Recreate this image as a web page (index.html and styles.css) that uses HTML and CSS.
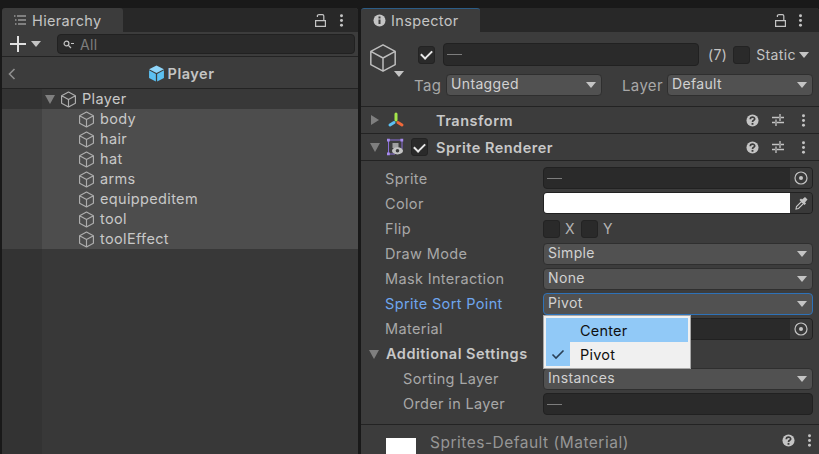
FILE: index.html
```html
<!DOCTYPE html>
<html lang="en">
<head>
    <meta charset="UTF-8">
    <title>Unity Editor</title>
    <link rel="stylesheet" href="styles.css">
</head>

<body>
    <svg class="defs" width="0" height="0">
        <symbol id="cube" viewBox="0 0 16 16">
            <path d="M8 1 14.5 4.5V11.5L8 15 1.5 11.5V4.5ZM1.5 4.5 8 8 14.5 4.5M8 8V15" fill="none" stroke="currentColor" stroke-linejoin="round"/>
        </symbol>
        <symbol id="lock" viewBox="0 0 11 13">
            <path d="M.6 6.6H10.4V12.4H.6ZM2.4 3V1.6C2.4 1 3 .7 4 .7H7.4C8.2 .7 8.8 1.2 8.8 2V6.6" fill="none" stroke="currentColor" stroke-width="1.2"/>
        </symbol>
        <symbol id="dots" viewBox="0 0 5 14">
            <circle cx="2.5" cy="2" r="1.6" fill="currentColor"/>
            <circle cx="2.5" cy="7" r="1.6" fill="currentColor"/>
            <circle cx="2.5" cy="12" r="1.6" fill="currentColor"/>
        </symbol>
        <symbol id="help" viewBox="0 0 14 14">
            <circle cx="7" cy="7" r="6.5" fill="currentColor"/>
            <path d="M4.6 5.6C4.6 2.7 9.4 2.7 9.4 5.3 9.4 6.9 7 6.7 7 8.6" fill="none" stroke="#3c3c3c" stroke-width="1.8"/>
            <rect x="6" y="9.6" width="2" height="2" fill="#3c3c3c"/>
        </symbol>
        <symbol id="sliders" viewBox="0 0 14 14">
            <path d="M1 4.5H8M10 4.5H13M9 1V8M1 9.5H4M6 9.5H13M5 6.5V13" fill="none" stroke="currentColor" stroke-width="1.3"/>
        </symbol>
        <symbol id="target" viewBox="0 0 14 14">
            <circle cx="7" cy="7" r="6" fill="none" stroke="currentColor" stroke-width="1.2"/>
            <circle cx="7" cy="7" r="2" fill="currentColor"/>
        </symbol>
    </svg>

    <div class="editor">
        <section class="panel hierarchy">
            <div class="tabbar">
                <div class="tab">
                    <svg class="tab-icon" width="14" height="12" viewBox="0 0 14 12"><path d="M4 2H13M5 6H13M5 10H13M1 2H2.5M2 6H3.5M2 10H3.5" stroke="#c4c4c4" stroke-width="1.1" fill="none"/></svg>
                    <span>Hierarchy</span>
                </div>
                <div class="tab-actions">
                    <svg width="11" height="13"><use href="#lock"/></svg>
                    <svg width="5" height="13"><use href="#dots"/></svg>
                </div>
            </div>
            <div class="toolbar">
                <svg class="plus" width="16" height="16" viewBox="0 0 16 16"><path d="M8 0V16M0 8H16" stroke="#e0e0e0" stroke-width="2"/></svg>
                <i class="caret light"></i>
                <div class="search">
                    <svg width="11" height="9" viewBox="0 0 11 9"><circle cx="3.5" cy="3.5" r="2.4" fill="none" stroke="#c4c4c4" stroke-width="1.2"/><path d="M5.5 5.5 8 8M8 3.5H11" stroke="#c4c4c4" stroke-width="1.2"/></svg>
                    <span>All</span>
                </div>
            </div>
            <div class="breadcrumb">
                <svg class="back" width="8" height="12" viewBox="0 0 8 12"><path d="M6.5 1 1.5 6 6.5 11" fill="none" stroke="#8f8f8f" stroke-width="1.6"/></svg>
                <div class="crumb">
                    <svg width="17" height="17" viewBox="0 0 16 16"><path d="M8 .5 15 4 8 7.6 1 4Z" fill="#8fd6fb"/><path d="M1 5 7.4 8.4V15.6L1 12.2Z" fill="#5cc0f2"/><path d="M15 5 8.6 8.4V15.6L15 12.2Z" fill="#5cc0f2"/></svg>
                    <span>Player</span>
                </div>
            </div>
            <div class="tree">
                <div class="tree-row root">
                    <i class="arrow-down"></i>
                    <svg class="cube" width="17" height="17"><use href="#cube"/></svg>
                    <span>Player</span>
                </div>
                <div class="tree-row child"><svg class="cube" width="17" height="17"><use href="#cube"/></svg><span>body</span></div>
                <div class="tree-row child"><svg class="cube" width="17" height="17"><use href="#cube"/></svg><span>hair</span></div>
                <div class="tree-row child"><svg class="cube" width="17" height="17"><use href="#cube"/></svg><span>hat</span></div>
                <div class="tree-row child"><svg class="cube" width="17" height="17"><use href="#cube"/></svg><span>arms</span></div>
                <div class="tree-row child"><svg class="cube" width="17" height="17"><use href="#cube"/></svg><span>equippeditem</span></div>
                <div class="tree-row child"><svg class="cube" width="17" height="17"><use href="#cube"/></svg><span>tool</span></div>
                <div class="tree-row child"><svg class="cube" width="17" height="17"><use href="#cube"/></svg><span>toolEffect</span></div>
            </div>
        </section>

        <section class="panel inspector">
            <div class="tabbar">
                <div class="tab active">
                    <svg class="tab-icon" width="13" height="13" viewBox="0 0 13 13"><circle cx="6.5" cy="6.5" r="6" fill="#c4c4c4"/><path d="M6.5 5.5V10M6.5 2.6V4.4" stroke="#3c3c3c" stroke-width="2"/></svg>
                    <span>Inspector</span>
                </div>
                <div class="tab-actions">
                    <svg width="11" height="13"><use href="#lock"/></svg>
                    <svg width="5" height="13"><use href="#dots"/></svg>
                </div>
            </div>

            <div class="object-header">
                <div class="object-icon">
                    <svg class="big-cube" width="30" height="30"><use href="#cube"/></svg>
                    <i class="caret light"></i>
                </div>
                <div class="object-main">
                    <div class="object-line">
                        <span class="check on"></span>
                        <div class="field name-field"><span class="dash"></span></div>
                        <span class="count">(7)</span>
                        <span class="check"></span>
                        <span class="static">Static</span>
                        <i class="caret light"></i>
                    </div>
                    <div class="object-line tags">
                        <span class="tag-label">Tag</span>
                        <div class="select tag-select"><span>Untagged</span><i class="caret"></i></div>
                        <span class="layer-label">Layer</span>
                        <div class="select layer-select"><span>Default</span><i class="caret"></i></div>
                    </div>
                </div>
            </div>

            <div class="component">
                <i class="arrow-right"></i>
                <svg class="comp-icon" width="18" height="18" viewBox="0 0 18 18" stroke-linecap="round">
                    <path d="M9 3V9" stroke="#a4e64a" stroke-width="3"/>
                    <path d="M7 11.5 3 14" stroke="#5cc0f2" stroke-width="3"/>
                    <path d="M11 11.5 15 14" stroke="#f0683a" stroke-width="3"/>
                </svg>
                <span class="comp-check-space"></span>
                <span class="comp-name">Transform</span>
                <div class="comp-actions">
                    <svg width="13" height="13"><use href="#help"/></svg>
                    <svg class="sliders" width="14" height="14"><use href="#sliders"/></svg>
                    <svg width="5" height="13"><use href="#dots"/></svg>
                </div>
            </div>

            <div class="component">
                <i class="arrow-down"></i>
                <svg class="comp-icon" width="18" height="18" viewBox="0 0 18 18">
                    <path d="M2.5 16V2H16V11" fill="none" stroke="#8a6fd8" stroke-width="1"/>
                    <path d="M2.5 16H9" fill="none" stroke="#8a6fd8" stroke-width="1"/>
                    <path d="M1 .8H3.8V3.6H1ZM14.4 .8H17.2V3.6H14.4ZM1 14.4H3.8V17.2H1Z" fill="#a78bf0"/>
                    <rect x="6.5" y="5" width="6" height="5" fill="#a0a0a0"/>
                    <ellipse cx="11.5" cy="12.8" rx="5.5" ry="3.6" fill="#c4c4c4"/>
                    <circle cx="11.5" cy="12.8" r="1.8" fill="#3c3c3c"/>
                </svg>
                <span class="check on"></span>
                <span class="comp-name">Sprite Renderer</span>
                <div class="comp-actions">
                    <svg width="13" height="13"><use href="#help"/></svg>
                    <svg class="sliders" width="14" height="14"><use href="#sliders"/></svg>
                    <svg width="5" height="13"><use href="#dots"/></svg>
                </div>
            </div>

            <div class="props">
                <div class="prop">
                    <label>Sprite</label>
                    <div class="field picker"><span class="dash"></span><b class="pick-btn"><svg width="14" height="14"><use href="#target"/></svg></b></div>
                </div>
                <div class="prop">
                    <label>Color</label>
                    <div class="field picker color"><span class="swatch"></span>
                        <b class="pick-btn"><svg width="13" height="14" viewBox="0 0 13 14"><path d="M1 13 1.5 10.5 6.5 5.5 8.5 7.5 3.5 12.5Z" fill="none" stroke="#c4c4c4" stroke-width="1.1"/><path d="M7 3.5 10 1 12.5 3.5 10 6.5 11 7.5 9.5 9 4.5 4 6 2.5Z" fill="#c4c4c4"/></svg></b>
                    </div>
                </div>
                <div class="prop flip-row">
                    <label>Flip</label>
                    <div class="flip">
                        <span class="check"></span><span>X</span>
                        <span class="check"></span><span>Y</span>
                    </div>
                </div>
                <div class="prop">
                    <label>Draw Mode</label>
                    <div class="select"><span>Simple</span><i class="caret"></i></div>
                </div>
                <div class="prop">
                    <label>Mask Interaction</label>
                    <div class="select"><span>None</span><i class="caret"></i></div>
                </div>
                <div class="prop focus">
                    <label>Sprite Sort Point</label>
                    <div class="select"><span>Pivot</span><i class="caret"></i></div>
                </div>
                <div class="prop">
                    <label>Material</label>
                    <div class="field picker"><span></span><b class="pick-btn"><svg width="14" height="14"><use href="#target"/></svg></b></div>
                </div>
                <div class="prop section">
                    <i class="arrow-down"></i>
                    <span>Additional Settings</span>
                </div>
                <div class="prop nested">
                    <label>Sorting Layer</label>
                    <div class="select"><span>Instances</span><i class="caret"></i></div>
                </div>
                <div class="prop nested">
                    <label>Order in Layer</label>
                    <div class="field"><span class="dash"></span></div>
                </div>
            </div>

            <div class="material">
                <span class="mat-thumb"></span>
                <span class="mat-name">Sprites-Default (Material)</span>
                <div class="comp-actions">
                    <svg width="13" height="13"><use href="#help"/></svg>
                    <svg width="5" height="13"><use href="#dots"/></svg>
                </div>
            </div>

            <ul class="menu">
                <li class="hover"><span class="gutter"></span>Center</li>
                <li><span class="gutter"><svg width="14" height="11" viewBox="0 0 14 11"><path d="M1.5 5.5 5 9 12.5 1.5" fill="none" stroke="#2a3f55" stroke-width="1.6"/></svg></span>Pivot</li>
            </ul>
        </section>
    </div>
</body>
</html>
```

FILE: styles.css
```css
* {
    box-sizing: border-box;
}

html, body {
    margin: 0;
    height: 100%;
    overflow: hidden;
}

body {
    font-family: 'Inter', 'Liberation Sans', sans-serif;
    font-size: 14px;
    letter-spacing: 0.35px;
    color: #c4c4c4;
    background-color: #191919;
}

.defs {
    position: absolute;
}

.editor {
    display: flex;
    gap: 3px;
    height: 454px;
    padding: 8px 0 0 2px;
}

.panel {
    display: flex;
    flex-direction: column;
    background-color: #3c3c3c;
    border-radius: 3px 3px 0 0;
    overflow: hidden;
}

.hierarchy {
    width: 356px;
}

.inspector {
    position: relative;
    flex: 1;
}

/* tabs */
.tabbar {
    display: flex;
    justify-content: space-between;
    height: 24px;
    flex: none;
    background-color: #282828;
}

.tab {
    display: flex;
    align-items: center;
    gap: 5px;
    width: 121px;
    padding-left: 11px;
    background-color: #3c3c3c;
    border-radius: 3px 3px 0 0;
    font-size: 14.5px;
}

.tab.active {
    width: 119px;
    padding-left: 12px;
    border-top: 1px solid #2c5d87;
}

.tab-actions {
    display: flex;
    align-items: center;
    gap: 13px;
    padding-right: 14px;
    color: #c4c4c4;
}

.inspector .tab-actions {
    gap: 12px;
    padding-right: 16px;
}

/* hierarchy toolbar */
.toolbar {
    display: flex;
    align-items: center;
    height: 25px;
    flex: none;
    padding: 0 3px 0 8px;
    border-bottom: 1px solid #232323;
}

.plus {
    margin-right: 5px;
}

.caret {
    display: block;
    flex: none;
    width: 0;
    height: 0;
    border-left: 5px solid transparent;
    border-right: 5px solid transparent;
    border-top: 6px solid #c4c4c4;
}

.search {
    display: flex;
    align-items: center;
    gap: 6px;
    flex: 1;
    height: 20px;
    margin-left: 16px;
    padding-left: 5px;
    background-color: #2a2a2a;
    border: 1px solid #212121;
    border-radius: 4px;
    color: #7d7d7d;
    font-size: 14px;
}

.breadcrumb {
    position: relative;
    display: flex;
    align-items: center;
    justify-content: center;
    height: 32px;
    flex: none;
    padding-top: 2px;
    border-bottom: 1px solid #232323;
}

.back {
    position: absolute;
    left: 6px;
    top: 11px;
}

.crumb {
    display: flex;
    align-items: center;
    gap: 3px;
    margin-left: 2px;
    font-weight: 600;
    font-size: 14.5px;
    letter-spacing: 0.5px;
}

/* tree */
.tree {
    flex: 1;
    background: linear-gradient(to right, #333333 40px, #383838 40px);
}

.tree-row {
    display: flex;
    align-items: center;
    height: 20px;
    font-size: 14.5px;
    color: #c8c8c8;
}

.tree-row span {
    margin-top: -1px;
}

.tree-row.root {
    padding-left: 43px;
    background: linear-gradient(to right, #333333 40px, #383838 40px);
}

.tree-row.child {
    padding-left: 76px;
    background: linear-gradient(to right, #424242 40px, #4d4d4d 40px);
}

.cube {
    flex: none;
    margin-right: 5px;
    color: #adadad;
    stroke-width: 1.1;
}

.root .cube {
    margin-left: 5px;
    margin-right: 5px;
}

.arrow-down {
    display: block;
    flex: none;
    width: 0;
    height: 0;
    border-left: 5px solid transparent;
    border-right: 5px solid transparent;
    border-top: 9px solid #7f7f7f;
}

.arrow-right {
    display: block;
    flex: none;
    width: 0;
    height: 0;
    margin: 0 1px 0 1px;
    border-top: 5px solid transparent;
    border-bottom: 5px solid transparent;
    border-left: 8px solid #7f7f7f;
}

/* object header */
.object-header {
    display: flex;
    height: 75px;
    flex: none;
    border-bottom: 1px solid #232323;
}

.object-icon {
    position: relative;
    width: 52px;
    padding: 11px 0 0 7px;
    color: #bdbdbd;
}

.big-cube {
    stroke-width: 0.8;
}

.object-icon .caret {
    position: absolute;
    left: 33px;
    top: 39px;
}

.object-main {
    flex: 1;
    padding-right: 6px;
}

.object-line {
    display: flex;
    align-items: center;
    height: 23px;
    margin-top: 11px;
    padding-left: 5px;
}

.check {
    display: flex;
    align-items: center;
    justify-content: center;
    flex: none;
    width: 17px;
    height: 18px;
    background-color: #2a2a2a;
    border: 1px solid #232323;
    border-radius: 3px;
}

.check.on::after {
    content: "";
    display: block;
    width: 9px;
    height: 5px;
    margin-top: -2px;
    border-left: 2px solid #e8e8e8;
    border-bottom: 2px solid #e8e8e8;
    transform: rotate(-45deg);
}

.field {
    display: flex;
    align-items: center;
    height: 22px;
    background-color: #2a2a2a;
    border: 1px solid #212121;
    border-radius: 4px;
    padding-left: 3px;
    overflow: hidden;
}

.dash {
    display: block;
    width: 15px;
    height: 1px;
    background-color: #7d7d7d;
}

.name-field {
    width: 256px;
    height: 23px;
    margin-left: 8px;
}

.count {
    margin: 0 6px 0 9px;
}

.static {
    margin: 0 3px 0 6px;
}

.tags {
    height: 22px;
    margin-top: 8px;
    padding-left: 0;
}

.tag-label {
    width: 33px;
    padding-left: 1px;
    font-size: 15px;
    color: #a8a8a8;
}

.layer-label {
    width: 46px;
    margin-left: 19px;
    padding-left: 1px;
    font-size: 15px;
    color: #a8a8a8;
    white-space: nowrap;
}

.select {
    display: flex;
    align-items: center;
    justify-content: space-between;
    height: 22px;
    padding: 0 5px 0 4px;
    background-color: #515151;
    border: 1px solid #2f2f2f;
    border-radius: 4px;
    color: #d2d2d2;
}

.select span {
    margin-top: -3px;
}

.tag-select {
    width: 156px;
}

.layer-select {
    flex: 1;
}

/* component rows */
.component {
    display: flex;
    align-items: center;
    height: 27px;
    flex: none;
    padding: 0 13px 0 9px;
    border-bottom: 1px solid #232323;
}

.component .arrow-down {
    margin-right: -1px;
}

.comp-icon {
    flex: none;
    margin: 0 7px 0 7px;
}

.comp-check-space {
    width: 16px;
    flex: none;
}

.comp-name {
    margin-left: 8px;
    font-weight: 600;
    font-size: 14.5px;
    letter-spacing: 0.5px;
    color: #c8c8c8;
}

.comp-actions {
    display: flex;
    align-items: center;
    gap: 12px;
    margin-left: auto;
    color: #c4c4c4;
}

.sliders {
    margin-right: 4px;
}

/* properties */
.props {
    flex: none;
    padding-top: 5px;
}

.prop {
    display: flex;
    align-items: center;
    height: 25px;
    padding: 0 6px 1px 24px;
}

.flip-row {
    height: 26px;
}

.prop label {
    width: 158px;
    flex: none;
    margin-top: -1px;
    font-size: 14.5px;
    color: #a8a8a8;
    white-space: nowrap;
}

.prop:nth-child(-n+2) label {
    margin-top: 1px;
}

.prop .select,
.prop .field,
.prop .flip {
    flex: 1;
}

.prop.focus label {
    color: #6fa6ee;
}

.prop.focus .select {
    border-color: #2e72b8;
}

.prop.section {
    gap: 7px;
    padding-left: 8px;
    font-weight: 600;
    font-size: 14.5px;
    letter-spacing: 0.5px;
    color: #c8c8c8;
}

.prop.section span {
    margin-top: -1px;
}

.prop.nested {
    padding-left: 42px;
}

.prop.nested label {
    width: 140px;
}

.picker {
    justify-content: space-between;
    padding-right: 0;
}

.picker.color {
    padding-left: 0;
    background-color: #333333;
}

.pick-btn {
    display: flex;
    align-items: center;
    justify-content: center;
    align-self: stretch;
    flex: none;
    width: 22px;
    background-color: #393939;
}

.swatch {
    flex: 1;
    align-self: stretch;
    background-color: #ffffff;
}

.flip {
    display: flex;
    align-items: center;
    gap: 5px;
    color: #b4b4b4;
}

.flip span:nth-child(3) {
    margin-left: 1px;
}

/* material */
.material {
    display: flex;
    align-items: flex-start;
    flex: 1;
    margin-top: 7px;
    padding: 7px 7px 0 25px;
    border-top: 1px solid #232323;
}

.mat-thumb {
    flex: none;
    width: 30px;
    height: 30px;
    margin-top: 6px;
    background-color: #ffffff;
}

.mat-name {
    margin: 1px 0 0 14px;
    font-size: 15.5px;
    letter-spacing: 0.5px;
    color: #969696;
}

.material .comp-actions {
    margin-top: 2px;
}

/* popup over the sort point field */
.menu {
    position: absolute;
    left: 182px;
    top: 307px;
    width: 148px;
    margin: 0;
    padding: 2px;
    list-style: none;
    background-color: #f0f0f0;
    border: 1px solid #a8a8a8;
    color: #101010;
    font-size: 14.5px;
    letter-spacing: 0.2px;
}

.menu li {
    display: flex;
    align-items: center;
    height: 24px;
}

.menu li.hover {
    background-color: #91c9f7;
}

.gutter {
    display: flex;
    align-items: center;
    justify-content: center;
    width: 24px;
    height: 100%;
    margin-right: 10px;
    background-color: #91c9f7;
}
```
